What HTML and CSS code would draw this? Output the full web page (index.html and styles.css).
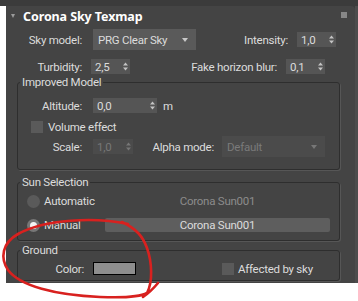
FILE: index.html
```html
<!DOCTYPE html>
<html lang="en">
<head>
    <meta charset="UTF-8">
    <title>Corona Sky Texmap</title>
    <link rel="stylesheet" href="styles.css">
</head>
<body>
    <div class="top"></div>
    <div class="main">
        <div class="gutter"></div>
        <div class="rollout">
            <div class="title"><span class="tri"></span>Corona Sky Texmap<span class="grip"></span></div>

            <div class="row r1">
                <span class="lbl w76">Sky model:</span>
                <div class="dd w103"><span>PRG Clear Sky</span><span class="arrow"></span></div>
                <span class="lbl w83">Intensity:</span>
                <div class="sp w39"><span>1,0</span><svg class="spin" width="5" height="9"><polygon points="0,3.5 2.5,0.5 5,3.5"/><polygon points="0,5.5 2.5,8.5 5,5.5"/></svg></div>
            </div>

            <div class="row r2">
                <span class="lbl w76">Turbidity:</span>
                <div class="sp w39"><span>2,5</span><svg class="spin" width="5" height="9"><polygon points="0,3.5 2.5,0.5 5,3.5"/><polygon points="0,5.5 2.5,8.5 5,5.5"/></svg></div>
                <span class="lbl w147">Fake horizon blur:</span>
                <div class="sp w39"><span>0,1</span><svg class="spin" width="5" height="9"><polygon points="0,3.5 2.5,0.5 5,3.5"/><polygon points="0,5.5 2.5,8.5 5,5.5"/></svg></div>
            </div>

            <!-- Improved Model -->
            <fieldset class="group improved">
                <legend>Improved Model</legend>
                <div class="row alt">
                    <span class="lbl w64">Altitude:</span>
                    <div class="sp w64"><span>0,0</span><svg class="spin" width="5" height="9"><polygon points="0,3.5 2.5,0.5 5,3.5"/><polygon points="0,5.5 2.5,8.5 5,5.5"/></svg></div>
                    <span class="unit">m</span>
                </div>
                <div class="row vol">
                    <span class="check"></span><span>Volume effect</span>
                </div>
                <div class="row scale">
                    <span class="lbl w64">Scale:</span>
                    <div class="sp w40 off"><span>1,0</span><svg class="spin" width="5" height="9"><polygon points="0,3.5 2.5,0.5 5,3.5"/><polygon points="0,5.5 2.5,8.5 5,5.5"/></svg></div>
                    <span class="lbl w81">Alpha mode:</span>
                    <div class="dd w103 off"><span>Default</span><span class="arrow"></span></div>
                </div>
            </fieldset>

            <!-- Sun Selection -->
            <fieldset class="group sun">
                <legend>Sun Selection</legend>
                <div class="row auto">
                    <div class="opt"><span class="radio"></span><span>Automatic</span></div>
                    <div class="sunname">Corona Sun001</div>
                </div>
                <div class="row manual">
                    <div class="opt"><span class="radio on"></span><span>Manual</span></div>
                    <div class="btn">Corona Sun001</div>
                </div>
            </fieldset>

            <!-- Ground -->
            <fieldset class="group ground">
                <legend>Ground</legend>
                <div class="row colorrow">
                    <span class="lbl w66">Color:</span>
                    <span class="swatch"></span>
                    <span class="check sky"></span><span>Affected by sky</span>
                </div>
            </fieldset>
        </div>
        <div class="edge"></div>
    </div>

    <svg class="scribble" width="358" height="301" viewBox="0 0 358 301">
        <path d="M128 224 C95 217 45 219 18 234 C2 243 0 258 8 270 C20 286 55 295 100 297 C125 298 140 297 147 293 C153 282 152 262 147 248 C143 237 137 229 122 222 M143 297 C149 293 153 289 158 283"/>
    </svg>
</body>
</html>
```

FILE: styles.css
```css
body {
    margin: 0;
    width: 358px;
    height: 301px;
    background: #fff;
    font-family: Roboto, "Noto Sans", sans-serif;
    font-size: 11.5px;
    letter-spacing: -0.25px;
    color: #dcdcdc;
    position: relative;
    overflow: hidden;
}
.top {
    height: 6px;
    background: #3b3b3b;
}
.main {
    display: flex;
    height: 277px;
    background: #3b3b3b;
}
.gutter {
    width: 6px;
    background: #fff;
}
.rollout {
    flex: 1;
    background: #444;
    border-top-right-radius: 4px;
    display: flex;
    flex-direction: column;
}
.edge {
    width: 3px;
    background: #4c4c4c;
}

/* titre du rollout */
.title {
    height: 20px;
    display: flex;
    align-items: center;
    padding-left: 5px;
    font-family: "Noto Sans", sans-serif;
    font-weight: bold;
    font-size: 12.5px;
    letter-spacing: -0.1px;
    color: #fff;
}
.tri {
    width: 0;
    height: 0;
    border-left: 2.5px solid transparent;
    border-right: 2.5px solid transparent;
    border-top: 4px solid #9a9a9a;
    margin-right: 8px;
}
.grip {
    margin-left: auto;
    margin-right: 8px;
    align-self: flex-start;
    margin-top: 6px;
    width: 6px;
    height: 6px;
    background-image: radial-gradient(circle, #8a8a8a 0.7px, transparent 0.9px);
    background-size: 2px 2px;
}

.row {
    display: flex;
    align-items: center;
}
.lbl {
    flex: none;
    text-align: right;
}
.w64 { width: 64px; }
.w66 { width: 66px; }
.w76 { width: 76px; }
.w81 { width: 81px; }
.w83 { width: 83px; }
.w147 { width: 147px; }

/* listes déroulantes */
.dd {
    flex: none;
    height: 21px;
    box-sizing: border-box;
    background: #5a5a5a;
    display: flex;
    align-items: center;
    justify-content: space-between;
    padding: 0 8px 0 5px;
    margin-left: 11px;
    margin-right: 9px;
}
.dd.w103 { width: 103px; }
.arrow {
    width: 0;
    height: 0;
    border-left: 3px solid transparent;
    border-right: 3px solid transparent;
    border-top: 4px solid #c8c8c8;
}
.dd.off {
    background: #4b4b4b;
    color: #7a7a7a;
    margin-left: 8px;
}
.dd.off .arrow { border-top-color: #777; }

/* spinners */
.sp {
    flex: none;
    height: 15px;
    box-sizing: border-box;
    background: #555;
    display: flex;
    align-items: center;
    justify-content: space-between;
    padding: 0 2px 0 4px;
    margin-left: 11px;
}
.sp.w39 { width: 39px; }
.sp.w40 { width: 40px; }
.sp.w64 { width: 64px; }
.r1 .sp, .r2 .lbl + .sp { margin-left: 9px; }
.spin { fill: #c4c4c4; }
.sp.off {
    background: #4b4b4b;
    color: #777;
}
.sp.off .spin { fill: #777; }

.r1 {
    height: 21px;
    margin-top: 3px;
}
.r2 {
    height: 15px;
    margin-top: 9px;
}

/* groupes */
.group {
    margin: 0 15px 0 11px;
    padding: 0;
    border: 1px solid #2e2e2e;
    border-radius: 3px;
    box-shadow: 1px 1px 0 #565656;
    min-width: 0;
}
.group legend {
    padding: 0 2px;
    margin-left: 2px;
    line-height: 14px;
}
.improved { margin-top: 1px; padding-bottom: 12px; }
.alt { height: 15px; margin-top: 9px; }
.unit { margin-left: 6px; }
.vol { height: 12px; margin-top: 8px; }
.check {
    width: 12px;
    height: 12px;
    background: #5a5a5a;
    margin-left: 13px;
    margin-right: 5px;
    flex: none;
}
.scale { height: 21px; margin-top: 3px; }

.sun { margin-top: 5px; padding-bottom: 8px; }
.opt {
    width: 87px;
    flex: none;
    display: flex;
    align-items: center;
}
.radio {
    width: 13px;
    height: 13px;
    border-radius: 50%;
    background: #5a5a5a;
    margin-left: 9px;
    margin-right: 4px;
    flex: none;
    display: flex;
    align-items: center;
    justify-content: center;
}
.radio.on { background: #777; }
.radio.on::after {
    content: "";
    width: 7px;
    height: 7px;
    border-radius: 50%;
    background: #f4f4f4;
}
.auto { height: 14px; margin-top: 5px; }
.sunname {
    width: 225px;
    text-align: center;
    color: #8c8c8c;
}
.manual { height: 14px; margin-top: 10px; }
.btn {
    width: 225px;
    height: 14px;
    line-height: 14px;
    background: #5e5e5e;
    border-radius: 2px;
    text-align: center;
}

.ground { margin-top: 2px; padding-bottom: 5px; }
.colorrow { height: 13px; margin-top: 5px; }
.swatch {
    width: 43px;
    height: 13px;
    box-sizing: border-box;
    border: 1px solid #000;
    background: #8e8e8e;
    margin-left: 9px;
    flex: none;
}
.check.sky { margin-left: 86px; margin-right: 4px; }

/* annotation rouge */
.scribble {
    position: absolute;
    left: 0;
    top: 0;
    pointer-events: none;
}
.scribble path {
    fill: none;
    stroke: #d8211f;
    stroke-width: 2.6;
    stroke-linecap: round;
}
```
